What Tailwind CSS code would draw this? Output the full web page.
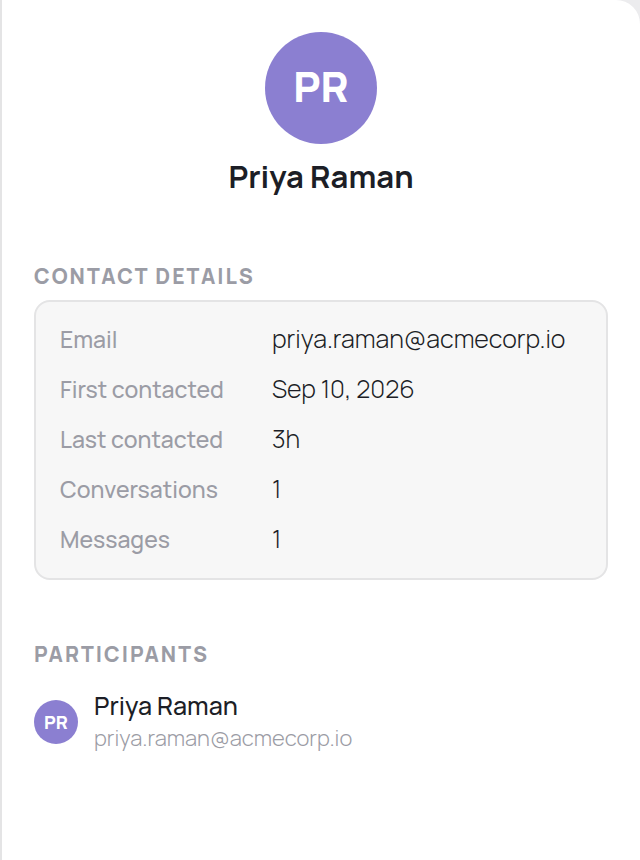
<!DOCTYPE html>
<html lang="en">
<head>
  <meta charset="UTF-8" />
  <meta name="viewport" content="width=device-width, initial-scale=1.0"/>
  <title>Priya Raman | Contact</title>
  <script src="https://cdn.jsdelivr.net/npm/@tailwindcss/browser@4"></script>
</head>

<body class="bg-[#ececee] text-[#1c1e26] font-['Manrope','Inter',sans-serif]">

  <!-- Contact panel -->
  <aside class="min-h-screen bg-white border-l-2 border-[#e4e4e5] rounded-tr-3xl px-8 pt-8 pb-24">

    <!-- Header -->
    <header class="flex flex-col items-center">
      <div class="size-28 pb-1 rounded-full bg-[#8b7fd1] text-white text-[42px] font-extrabold flex items-center justify-center">PR</div>
      <h1 class="mt-3 text-[31px] leading-10 font-bold">Priya Raman</h1>
    </header>

    <!-- Contact details -->
    <section class="mt-[66px]">
      <h2 class="text-[21px] leading-7 font-extrabold tracking-[2px] uppercase text-[#9b9ca5]">Contact details</h2>
      <dl class="mt-2.5 grid grid-cols-[212px_1fr] px-6 pt-3 pb-3.5 bg-[#f7f7f7] border-2 border-[#e4e4e5] rounded-2xl text-[25px] leading-[50px] font-[350]">
        <dt class="text-[23px] font-medium text-[#9b9ca5]">Email</dt>
        <dd>priya.raman@acmecorp.io</dd>
        <dt class="text-[23px] font-medium text-[#9b9ca5]">First contacted</dt>
        <dd>Sep 10, 2026</dd>
        <dt class="text-[23px] font-medium text-[#9b9ca5]">Last contacted</dt>
        <dd>3h</dd>
        <dt class="text-[23px] font-medium text-[#9b9ca5]">Conversations</dt>
        <dd>1</dd>
        <dt class="text-[23px] font-medium text-[#9b9ca5]">Messages</dt>
        <dd>1</dd>
      </dl>
    </section>

    <!-- Participants -->
    <section class="mt-[60px]">
      <h2 class="text-[21px] leading-7 font-extrabold tracking-[2px] uppercase text-[#9b9ca5]">Participants</h2>
      <ul class="mt-[22px]">
        <li class="flex items-center gap-4">
          <div class="size-11 shrink-0 rounded-full bg-[#8b7fd1] text-white text-[18px] font-extrabold flex items-center justify-center">PR</div>
          <div>
            <p class="text-[25px] leading-8 font-medium">Priya Raman</p>
            <p class="text-[22px] leading-8 font-[350] text-[#9b9ca5]">priya.raman@acmecorp.io</p>
          </div>
        </li>
      </ul>
    </section>

  </aside>

</body>
</html>
